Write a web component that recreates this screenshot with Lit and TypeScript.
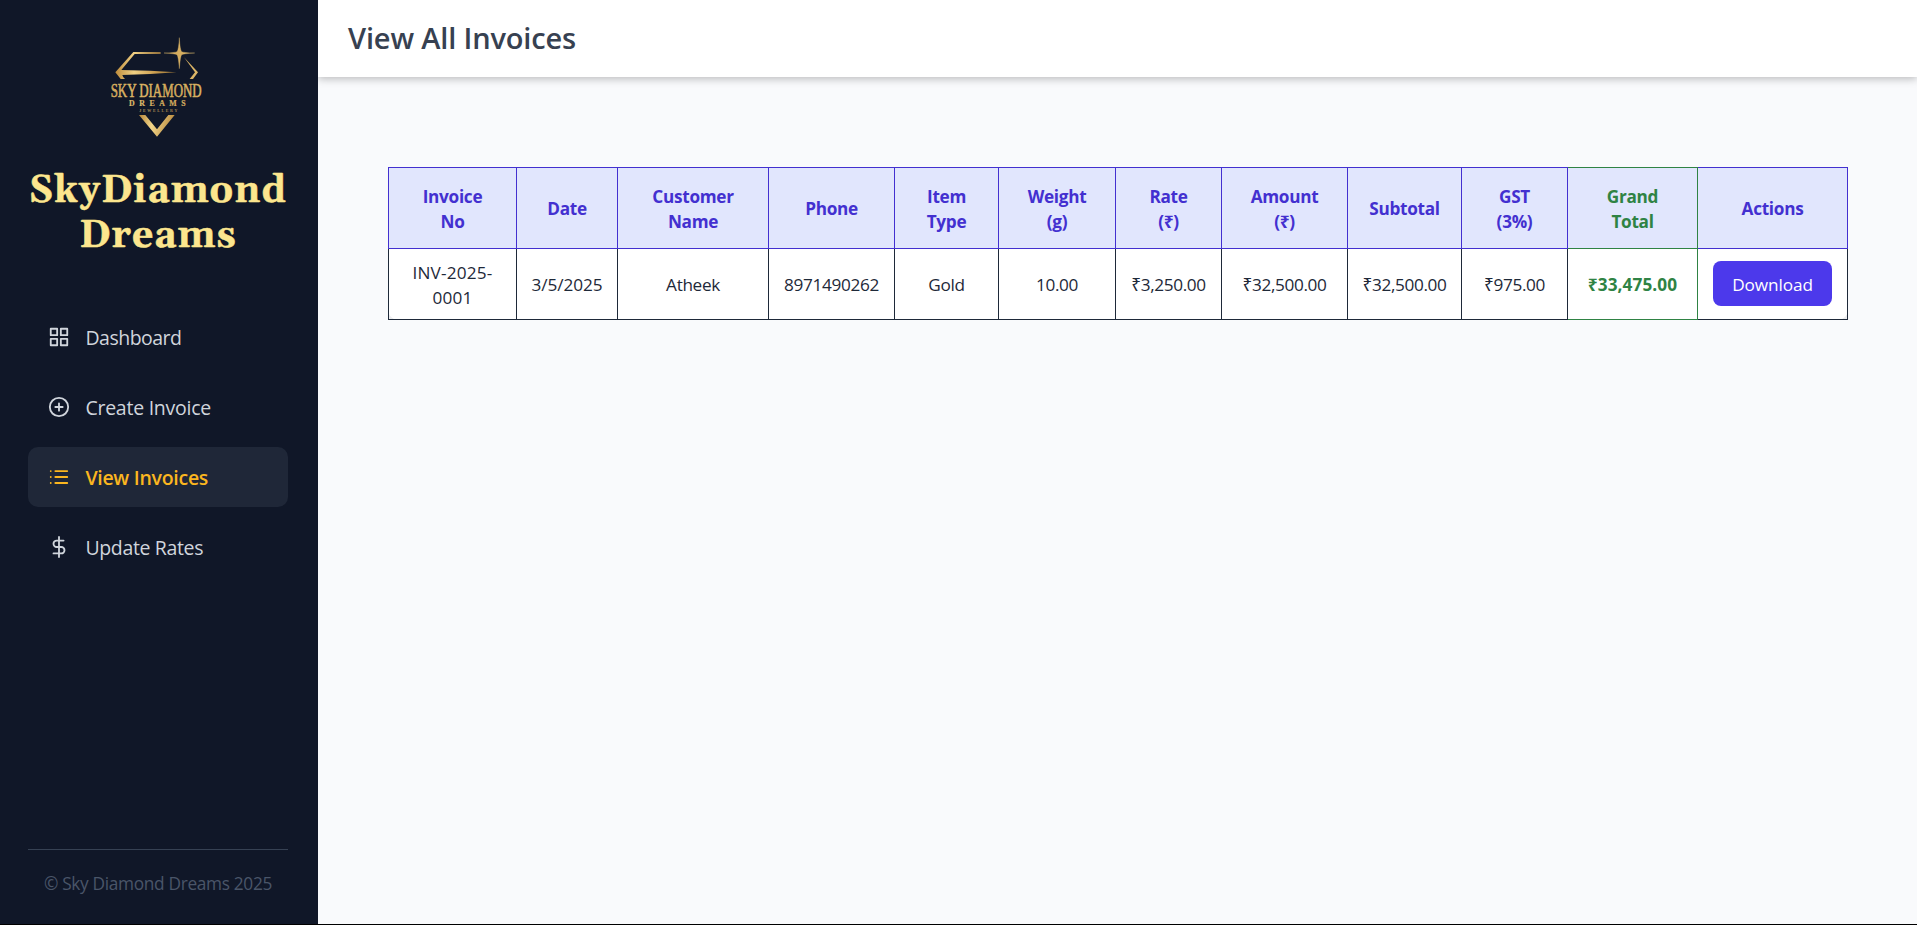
import { LitElement, html, svg, css } from "lit";
import { customElement } from "lit/decorators.js";
import { classMap } from "lit/directives/class-map.js";

@customElement("brand-logo")
class BrandLogo extends LitElement {
  static styles = css`
    :host { display: block; width: 140px; height: 130px; }
    svg { display: block; overflow: visible; }
    text { font-family: "Liberation Serif", serif; fill: url(#gold); }
  `;
  render() {
    return html`<svg width="140" height="130" viewBox="-6 0 420 390">
      <defs>
        <linearGradient id="gold" gradientUnits="userSpaceOnUse" x1="60" y1="0" x2="340" y2="0">
          <stop offset="0" stop-color="#cda052" />
          <stop offset="0.3" stop-color="#e6c273" />
          <stop offset="0.6" stop-color="#d0a557" />
          <stop offset="1" stop-color="#dfba6b" />
        </linearGradient>
        <linearGradient id="edge" gradientUnits="userSpaceOnUse" x1="76" y1="0" x2="262" y2="0">
          <stop offset="0" stop-color="#bd8c3c" />
          <stop offset="0.3" stop-color="#f0d084" />
          <stop offset="0.65" stop-color="#c99b4d" />
          <stop offset="1" stop-color="#8a6a35" />
        </linearGradient>
        <linearGradient id="vee" gradientUnits="userSpaceOnUse" x1="148" y1="290" x2="252" y2="320">
          <stop offset="0" stop-color="#b98a3d" />
          <stop offset="0.4" stop-color="#f2d68a" />
          <stop offset="1" stop-color="#b5853a" />
        </linearGradient>
      </defs>
      <path fill="url(#edge)" d="M130 96 L212 97 L212 101 L134 102 L94 150 L180 152 L260 157 L180 162 L97 165 Q98 171 105 177 L92 177 L76 157 Z" />
      <path fill="url(#gold)" stroke="#e0bb6c" stroke-width="1" d="M268 53 Q270 90 275 95 Q280 98 314 99 Q280 101 275 104 Q271 108 268 146 Q265 108 261 104 Q256 101 222 99 Q256 98 261 95 Q266 90 268 53 Z" />
      <path fill="url(#gold)" d="M282 112 L324 157 L309 177 L299 177 L315 157 Z" />
      <text x="62" y="230" font-size="59" stroke="#d9b160" stroke-width="1.8" textLength="273" lengthAdjust="spacingAndGlyphs">SKY DIAMOND</text>
      <text x="117" y="257" font-size="23.5" font-weight="700" stroke="#d9b160" stroke-width="0.6" textLength="170" lengthAdjust="spacing">DREAMS</text>
      <text x="148" y="276" font-size="12" font-weight="700" opacity="0.75" textLength="114" lengthAdjust="spacing">JEWELLERY</text>
      <path fill="url(#vee)" d="M147 285 L166 285 L201 328 L235 285 L254 285 L201 350 Z" />
    </svg>`;
  }
}

const icons = {
  grid: svg`<rect x="3" y="3" width="7" height="7"/><rect x="14" y="3" width="7" height="7"/><rect x="14" y="14" width="7" height="7"/><rect x="3" y="14" width="7" height="7"/>`,
  plus: svg`<circle cx="12" cy="12" r="10"/><path d="M12 8v8M8 12h8"/>`,
  list: svg`<path d="M8 5.5h13M8 12h13M8 18.5h13M3 5.5h.01M3 12h.01M3 18.5h.01"/>`,
  dollar: svg`<path d="M12 1v22M17 5H9.5a3.5 3.5 0 0 0 0 7h5a3.5 3.5 0 0 1 0 7H6"/>`,
};

const nav = [
  { icon: "grid", label: "Dashboard", cls: "dash" },
  { icon: "plus", label: "Create Invoice", cls: "create" },
  { icon: "list", label: "View Invoices", cls: "active" },
  { icon: "dollar", label: "Update Rates", cls: "rates" },
] as const;

@customElement("side-bar")
class SideBar extends LitElement {
  static styles = css`
    :host {
      display: flex; flex-direction: column; box-sizing: border-box;
      width: 318px; flex: none; padding: 20px 30px 0 28px;
      background: #101728;
    }
    .brand { display: flex; flex-direction: column; align-items: center; }
    h1 {
      margin: 19px 0 0; width: 260px; text-align: center; color: #fce68e;
      font: 700 37.2px/45px Gelasio, Georgia, serif; letter-spacing: 1.15px;
      -webkit-text-stroke: 0.5px #fce68e; white-space: nowrap;
    }
    nav { display: flex; flex-direction: column; gap: 10px; margin-top: 48px; }
    .item {
      display: flex; align-items: center; gap: 15.4px; height: 60px;
      box-sizing: border-box; padding: 0 20px; border-radius: 10px;
      color: #d0d5dc; font-size: 19.5px; line-height: 28px; letter-spacing: -0.35px;
      white-space: nowrap;
    }
    .item span { padding-top: 2px; }
    .item svg {
      width: 22px; height: 22px; fill: none; stroke: currentColor;
      stroke-width: 2; stroke-linecap: round; stroke-linejoin: round;
    }
    .dash { letter-spacing: -0.5px; }
    .create { letter-spacing: -0.25px; }
    .active { background: #1f2738; color: #fbb61f; font-weight: 600; letter-spacing: -0.28px; }
    footer {
      margin-top: auto; border-top: 1px solid #364153; height: 75px;
      padding-top: 21px; box-sizing: border-box; text-align: center;
      color: #4a5568; font-size: 17.3px; line-height: 26px; letter-spacing: -0.33px;
      white-space: nowrap;
    }
  `;
  render() {
    return html`
      <div class="brand">
        <brand-logo></brand-logo>
        <h1>SkyDiamond<br />Dreams</h1>
      </div>
      <nav>
        ${nav.map((n) => html`<a class=${"item " + n.cls}>
          <svg viewBox="0 0 24 24">${icons[n.icon]}</svg><span>${n.label}</span>
        </a>`)}
      </nav>
      <footer>© Sky Diamond Dreams 2025</footer>
    `;
  }
}

const columns = [
  { head: ["Invoice", "No"], width: 128, cls: "inv" },
  { head: ["Date"], width: 101, cls: "date" },
  { head: ["Customer", "Name"], width: 151, cls: "" },
  { head: ["Phone"], width: 126, cls: "" },
  { head: ["Item", "Type"], width: 104, cls: "" },
  { head: ["Weight", "(g)"], width: 117, cls: "" },
  { head: ["Rate", "(₹)"], width: 106, cls: "" },
  { head: ["Amount", "(₹)"], width: 126, cls: "" },
  { head: ["Subtotal"], width: 114, cls: "" },
  { head: ["GST", "(3%)"], width: 106, cls: "" },
  { head: ["Grand", "Total"], width: 130, cls: "total" },
  { head: ["Actions"], width: 150, cls: "" },
];
const row = ["INV-2025-0001", "3/5/2025", "Atheek", "8971490262", "Gold", "10.00", "₹3,250.00", "₹32,500.00", "₹32,500.00", "₹975.00", "₹33,475.00"];

@customElement("invoice-table")
class InvoiceTable extends LitElement {
  static styles = css`
    :host { display: block; width: 1460px; overflow: hidden; }
    table {
      width: 1459px; table-layout: fixed; border-collapse: collapse;
      background: #fff; border-radius: 10px; box-shadow: 0 0 10px rgba(0, 0, 0, 0.16);
      font-size: 17.2px; line-height: 25px; text-align: center;
    }
    th, td { box-sizing: border-box; vertical-align: middle; border: 1px solid; }
    th {
      height: 81px; padding: 1px 12px 0; color: #4330d0; border-color: #4330d0;
      background: #e1e6fd; font-weight: 700; letter-spacing: -0.3px;
    }
    td { height: 71px; padding: 0 10px; color: #1e2939; border-color: #1e2939; letter-spacing: -0.35px; }
    td.inv { letter-spacing: 0.2px; padding-top: 1px; }
    td.date { letter-spacing: -0.1px; }
    .total { color: #2f8344; border-color: #2f8344; }
    td.total { font-weight: 700; letter-spacing: 0.1px; }
    td.action { padding: 0 0 2px; }
    button {
      display: block; margin: 0 auto; width: 119px; height: 45px; border: 0; border-radius: 8px;
      background: #4c39eb; color: #fff; font: inherit; letter-spacing: -0.1px; padding: 2px 0 0;
    }
  `;
  render() {
    return html`<table>
      <colgroup>${columns.map((c) => html`<col style="width:${c.width}px" />`)}</colgroup>
      <thead><tr>
        ${columns.map((c) => html`<th class=${classMap({ total: c.cls === "total" })}>${c.head.map((h, i) => (i ? html`<br />${h}` : h))}</th>`)}
      </tr></thead>
      <tbody><tr>
        ${row.map((v, i) => html`<td class=${columns[i].cls}>${v}</td>`)}
        <td class="action"><button>Download</button></td>
      </tr></tbody>
    </table>`;
  }
}

@customElement("app-root")
class AppRoot extends LitElement {
  static styles = css`
    :host {
      display: flex; box-sizing: border-box; height: 925px; width: 100%;
      border-bottom: 1px solid #000; overflow: hidden;
      font-family: "Open Sans", "Noto Sans", sans-serif;
    }
    main { flex: 1; min-width: 0; background: #f9fafc; display: flex; flex-direction: column; }
    header {
      height: 77px; box-sizing: border-box; padding: 0 30px 1px; background: #fff;
      display: flex; align-items: center; box-shadow: 0 2px 8px rgba(0, 0, 0, 0.25);
      clip-path: inset(0 0 -14px 0);
    }
    h2 { margin: 0; font-size: 29px; line-height: 36px; font-weight: 600; letter-spacing: -0.16px; color: #374151; }
    .content { padding: 90px 70px; }
  `;
  render() {
    return html`
      <side-bar></side-bar>
      <main>
        <header><h2>View All Invoices</h2></header>
        <div class="content"><invoice-table></invoice-table></div>
      </main>
    `;
  }
}
